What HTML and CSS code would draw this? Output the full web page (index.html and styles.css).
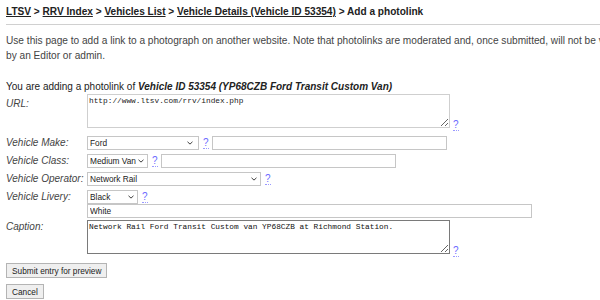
FILE: index.html
```html
<!DOCTYPE html>
<html lang="en">
<head>
<meta charset="utf-8">
<title>Add a photolink</title>
<link rel="stylesheet" href="styles.css">
</head>
<body>
<div class="page">
  <div class="crumbs"><a href="#">LTSV</a> &gt; <a href="#">RRV Index</a> &gt; <a href="#">Vehicles List</a> &gt; <a href="#">Vehicle Details (Vehicle ID 53354)</a> &gt; Add a photolink</div>
  <div class="rule"></div>
  <p class="intro">Use this page to add a link to a photograph on another website. Note that photolinks are moderated and, once submitted, will not be visible until approved<br>by an Editor or admin.</p>
  <p class="adding">You are adding a photolink of <b><i>Vehicle ID 53354 (YP68CZB Ford Transit Custom Van)</i></b></p>
  <form class="form">
    <div class="row row-url">
      <label class="lbl lbl-url">URL:</label>
      <div class="field field-bottom">
        <textarea class="ta">http://www.ltsv.com/rrv/index.php</textarea>
        <a class="help help-ta" href="#">?</a>
      </div>
    </div>
    <div class="row row-make">
      <label class="lbl">Vehicle Make:</label>
      <div class="field">
        <span class="sel sel-make"><select><option>Ford</option></select><svg class="chev" viewBox="0 0 7 4"><path d="M0.6 0.6L3.5 3.3L6.4 0.6"/></svg></span>
        <a class="help" href="#">?</a>
        <input class="txt txt-make" type="text">
      </div>
    </div>
    <div class="row row-next">
      <label class="lbl">Vehicle Class:</label>
      <div class="field">
        <span class="sel sel-class"><select><option>Medium Van</option></select><svg class="chev" viewBox="0 0 7 4"><path d="M0.6 0.6L3.5 3.3L6.4 0.6"/></svg></span>
        <a class="help" href="#">?</a>
        <input class="txt txt-class" type="text">
      </div>
    </div>
    <div class="row row-next">
      <label class="lbl">Vehicle Operator:</label>
      <div class="field">
        <span class="sel sel-op"><select><option>Network Rail</option></select><svg class="chev" viewBox="0 0 7 4"><path d="M0.6 0.6L3.5 3.3L6.4 0.6"/></svg></span>
        <a class="help" href="#">?</a>
      </div>
    </div>
    <div class="row row-next row-livery">
      <label class="lbl">Vehicle Livery:</label>
      <div class="stack">
        <div class="field">
          <span class="sel sel-liv"><select><option>Black</option></select><svg class="chev" viewBox="0 0 7 4"><path d="M0.6 0.6L3.5 3.3L6.4 0.6"/></svg></span>
          <a class="help" href="#">?</a>
        </div>
        <input class="txt txt-white" type="text" value="White">
      </div>
    </div>
    <div class="row row-caption">
      <label class="lbl">Caption:</label>
      <div class="field field-bottom">
        <textarea class="ta ta-focus">Network Rail Ford Transit Custom van YP68CZB at Richmond Station.</textarea>
        <a class="help help-ta" href="#">?</a>
      </div>
    </div>
    <div class="buttons">
      <button type="button" class="btn">Submit entry for preview</button>
      <button type="button" class="btn btn-cancel">Cancel</button>
    </div>
  </form>
</div>
</body>
</html>
```
FILE: styles.css
```css
html, body {
  margin: 0;
  padding: 0;
  overflow: hidden;
  background: #fff;
}
body {
  font-family: "Liberation Sans", Arial, sans-serif;
  font-size: 10px;
  color: #222;
}
.page {
  width: 680px;
  padding: 0 0 0 6px;
}
.crumbs {
  margin-top: 6px;
  line-height: 12px;
  font-weight: bold;
  font-size: 10.1px;
  color: #222;
  white-space: nowrap;
}
.crumbs a {
  color: #222;
  text-decoration: underline;
}
.rule {
  margin-top: 6px;
  height: 1px;
  background: #d0d0d0;
}
.intro {
  margin: 8px 0 0;
  line-height: 15px;
  font-size: 10.15px;
  color: #444;
  white-space: nowrap;
}
.adding {
  margin: 17px 0 0;
  line-height: 14px;
  color: #222;
}
.form {
  margin-top: 0;
  display: flex;
  flex-direction: column;
}
.row {
  display: grid;
  grid-template-columns: 81px 1fr;
  align-items: center;
}
.row-url, .row-caption {
  align-items: start;
}
.row-make { margin-top: 8px; }
.row-next { margin-top: 4px; }
.row-livery { align-items: start; }
.row-caption { margin-top: 2px; }
.lbl {
  font-style: italic;
  line-height: 14px;
  color: #444;
  white-space: nowrap;
}
.lbl-url { padding-top: 3px; }
.field {
  display: flex;
  align-items: center;
}
.field-bottom {
  align-items: flex-end;
}
.stack {
  display: flex;
  flex-direction: column;
}
.ta {
  box-sizing: border-box;
  width: 363px;
  height: 34px;
  margin: 0;
  padding: 2px 1px;
  border: 1px solid #cfcfcf;
  font-family: "Liberation Mono", "Courier New", monospace;
  font-size: 7.8px;
  line-height: 9px;
  color: #222;
  background: #fff;
  outline: none;
}
.ta-focus {
  border-color: #7a7a7a;
  color: #111;
}
.help {
  margin-left: 4px;
  font-size: 10px;
  line-height: 11px;
  color: #6a6aff;
  text-decoration: none;
  border-bottom: 1px dotted #9a9aff;
}
.help-ta {
  margin-left: 3px;
  margin-bottom: -3px;
}
.sel {
  position: relative;
  display: inline-flex;
}
.sel select {
  appearance: none;
  -webkit-appearance: none;
  box-sizing: border-box;
  width: 100%;
  height: 14px;
  margin: 0;
  padding: 0 0 0 2px;
  border: 1px solid #c6c6c6;
  border-radius: 0;
  background: #fff;
  font-family: "Liberation Sans", Arial, sans-serif;
  font-size: 8.3px;
  color: #222;
}
.chev {
  position: absolute;
  right: 4px;
  top: 5px;
  width: 6px;
  height: 4px;
  fill: none;
  stroke: #333;
  stroke-width: 1.1;
  pointer-events: none;
}
.sel-make { width: 112px; }
.sel-class { width: 61px; }
.sel-op { width: 174px; }
.sel-liv { width: 51px; }
.sel-make .chev { right: 6px; }
.txt {
  box-sizing: border-box;
  height: 14px;
  margin: 0;
  padding: 0 2px;
  border: 1px solid #c6c6c6;
  border-radius: 0;
  font-family: "Liberation Sans", Arial, sans-serif;
  font-size: 8.3px;
  color: #222;
  background: #fff;
}
.txt-make { width: 235px; margin-left: 3px; }
.txt-class { width: 235px; margin-left: 3px; }
.txt-white { width: 445px; margin-top: 0; }
.buttons {
  display: flex;
  flex-direction: column;
  align-items: flex-start;
  margin-top: 9px;
}
.btn {
  box-sizing: border-box;
  height: 15px;
  margin: 0;
  padding: 0 5px;
  border: 1px solid #b4b4b4;
  border-radius: 0;
  background: #efefef;
  font-family: "Liberation Sans", Arial, sans-serif;
  font-size: 8.3px;
  line-height: 12px;
  color: #222;
}
.btn-cancel {
  margin-top: 6px;
}
```
